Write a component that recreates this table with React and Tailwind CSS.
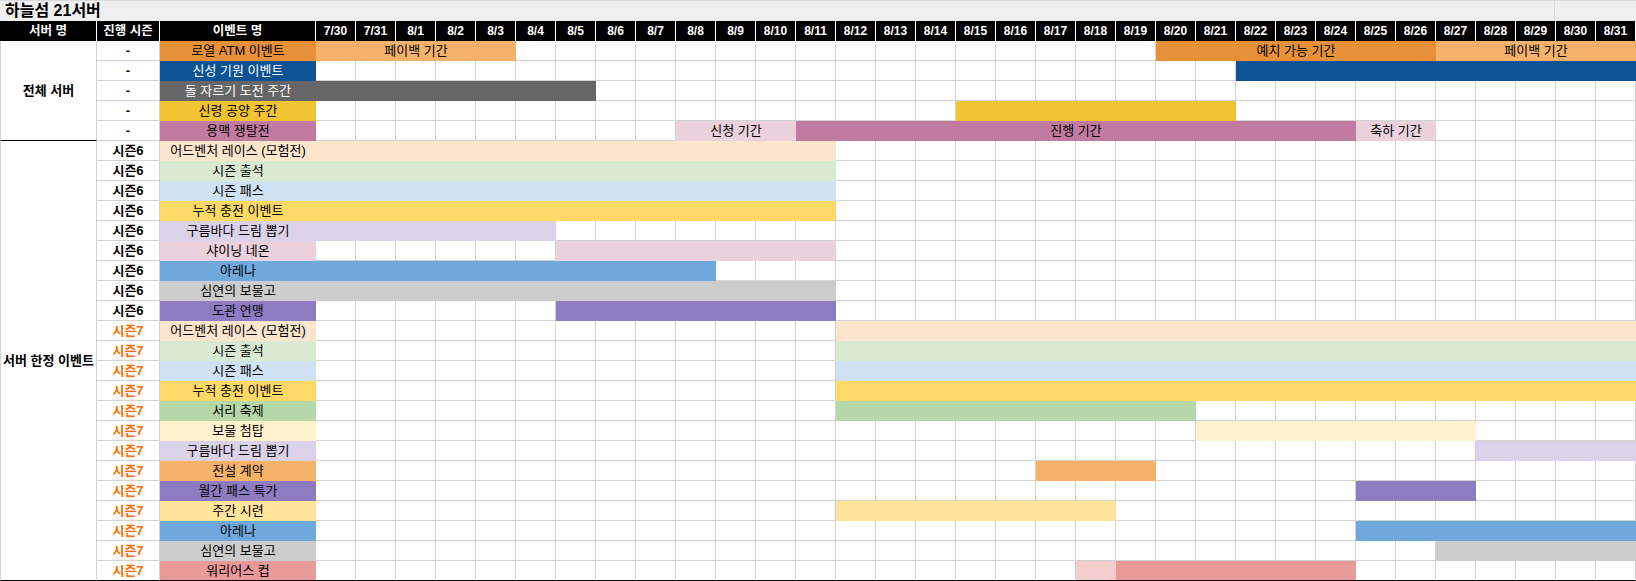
import React from "react";

const FONT = "font-['Liberation_Sans','Noto_Sans_CJK_KR',sans-serif]";

const dates = [
  "7/30", "7/31",
  ...Array.from({ length: 31 }, (_, i) => `8/${i + 1}`),
];

const section1 = [
  {
    season: "-",
    name: "로열 ATM 이벤트",
    bg: "bg-[#e69138]",
    fg: "text-black",
    segs: [
      { s: 0, n: 5, bg: "bg-[#f6b26b]", t: "페이백 기간" },
      { s: 21, n: 7, bg: "bg-[#e69138]", t: "예치 가능 기간" },
      { s: 28, n: 5, bg: "bg-[#f6b26b]", t: "페이백 기간" },
    ],
  },
  {
    season: "-",
    name: "신성 기원 이벤트",
    bg: "bg-[#0b5394]",
    fg: "text-white",
    segs: [{ s: 23, n: 10, bg: "bg-[#0b5394]" }],
  },
  {
    season: "-",
    name: "돌 자르기 도전 주간",
    bg: "bg-[#666666]",
    fg: "text-white",
    segs: [{ s: 0, n: 7, bg: "bg-[#666666]" }],
  },
  {
    season: "-",
    name: "신령 공양 주간",
    bg: "bg-[#f1c232]",
    fg: "text-black",
    segs: [{ s: 16, n: 7, bg: "bg-[#f1c232]" }],
  },
  {
    season: "-",
    name: "용맥 쟁탈전",
    bg: "bg-[#c27ba0]",
    fg: "text-black",
    segs: [
      { s: 9, n: 3, bg: "bg-[#ead1dc]", t: "신청 기간" },
      { s: 12, n: 14, bg: "bg-[#c27ba0]", t: "진행 기간" },
      { s: 26, n: 2, bg: "bg-[#ead1dc]", t: "축하 기간" },
    ],
  },
];

const s6 = (name, bg, s, n) => ({
  season: "시즌6",
  s7: false,
  name,
  bg,
  fg: "text-black",
  segs: [{ s, n, bg }],
});
const s7 = (name, bg, s, n) => ({
  season: "시즌7",
  s7: true,
  name,
  bg,
  fg: "text-black",
  segs: [{ s, n, bg }],
});

const section2 = [
  s6("어드벤처 레이스 (모험전)", "bg-[#fce5cd]", 0, 13),
  s6("시즌 출석", "bg-[#d9ead3]", 0, 13),
  s6("시즌 패스", "bg-[#cfe2f3]", 0, 13),
  s6("누적 충전 이벤트", "bg-[#ffd966]", 0, 13),
  s6("구름바다 드림 뽑기", "bg-[#d9d2e9]", 0, 6),
  s6("샤이닝 네온", "bg-[#ead1dc]", 6, 7),
  s6("아레나", "bg-[#6fa8dc]", 0, 10),
  s6("심연의 보물고", "bg-[#cccccc]", 0, 13),
  s6("도관 연맹", "bg-[#8e7cc3]", 6, 7),
  s7("어드벤처 레이스 (모험전)", "bg-[#fce5cd]", 13, 20),
  s7("시즌 출석", "bg-[#d9ead3]", 13, 20),
  s7("시즌 패스", "bg-[#cfe2f3]", 13, 20),
  s7("누적 충전 이벤트", "bg-[#ffd966]", 13, 20),
  s7("서리 축제", "bg-[#b6d7a8]", 13, 9),
  s7("보물 첨탑", "bg-[#fff2cc]", 22, 7),
  s7("구름바다 드림 뽑기", "bg-[#d9d2e9]", 29, 4),
  s7("전설 계약", "bg-[#f6b26b]", 18, 3),
  s7("월간 패스 특가", "bg-[#8e7cc3]", 26, 3),
  s7("주간 시련", "bg-[#ffe599]", 13, 7),
  s7("아레나", "bg-[#6fa8dc]", 26, 7),
  s7("심연의 보물고", "bg-[#cccccc]", 28, 5),
  {
    season: "시즌7",
    s7: true,
    name: "워리어스 컵",
    bg: "bg-[#ea9999]",
    fg: "text-black",
    segs: [
      { s: 19, n: 1, bg: "bg-[#f4cccc]" },
      { s: 20, n: 6, bg: "bg-[#ea9999]" },
    ],
  },
];

function Row({ row, last }) {
  const bottom = last ? "border-b border-b-black" : "";
  const items = [];
  let col = 0;
  const segs = [...row.segs].sort((a, b) => a.s - b.s);
  for (const seg of segs) {
    while (col < seg.s) {
      items.push(
        <div
          key={`c${col}`}
          className={`border-r border-b border-[#d3d3d3] bg-white ${bottom}`}
        />
      );
      col++;
    }
    items.push(
      <div
        key={`s${seg.s}`}
        className={`${seg.bg} ${bottom} flex items-center justify-center overflow-hidden whitespace-nowrap text-[13px] text-black`}
        style={{ gridColumn: `span ${seg.n} / span ${seg.n}` }}
      >
        {seg.t || ""}
      </div>
    );
    col += seg.n;
  }
  while (col < 33) {
    items.push(
      <div
        key={`c${col}`}
        className={`border-r border-b border-[#d3d3d3] bg-white ${bottom}`}
      />
    );
    col++;
  }
  return (
    <>
      <div
        className={`flex items-center justify-center border-r border-b border-[#d3d3d3] bg-white text-[13px] font-bold ${
          row.s7 ? "text-[#ff6d01]" : "text-black"
        } ${bottom}`}
      >
        {row.season}
      </div>
      <div
        className={`flex items-center justify-center whitespace-nowrap ${row.bg} ${row.fg} text-[13px] ${bottom}`}
      >
        {row.name}
      </div>
      {items}
    </>
  );
}

export default function App() {
  const all = [...section1, ...section2];
  return (
    <div className={`w-[1636px] bg-white ${FONT}`}>
      {/* Title */}
      <div className="flex h-[21px] border-t border-[#d9d9d9] bg-[#efefef]">
        <div className="flex w-[1555px] items-center border-r border-[#d9d9d9] pl-[5px] text-[16px] font-bold leading-none text-black">
          하늘섬 21서버
        </div>
        <div className="flex-1" />
      </div>

      {/* Header */}
      <div className="grid h-[20px] grid-cols-[97px_63px_156px_repeat(33,40px)] bg-black text-[12px] font-bold text-white">
        <div className="flex items-center justify-center border-r border-white text-[12.5px]">
          서버 명
        </div>
        <div className="flex items-center justify-center border-r border-white text-[12.5px]">
          진행 시즌
        </div>
        <div className="flex items-center justify-center border-r border-white text-[12.5px]">
          이벤트 명
        </div>
        {dates.map((d) => (
          <div
            key={d}
            className="flex items-center justify-center border-r border-white"
          >
            {d}
          </div>
        ))}
      </div>

      {/* Body */}
      <div className="grid grid-cols-[97px_63px_156px_repeat(33,40px)] grid-rows-[repeat(27,20px)]">
        <div className="col-start-1 row-start-1 row-span-5 flex items-center justify-center border-l border-r border-b border-l-[#d3d3d3] border-r-[#d3d3d3] border-b-black bg-white text-[13px] font-bold text-black">
          전체 서버
        </div>
        <div className="col-start-1 row-start-6 row-span-22 flex items-center justify-center border-l border-r border-b border-l-[#d3d3d3] border-r-[#d3d3d3] border-b-black bg-white text-[13px] font-bold text-black">
          서버 한정 이벤트
        </div>
        {all.map((row, i) => (
          <Row key={i} row={row} last={i === all.length - 1} />
        ))}
      </div>
    </div>
  );
}
